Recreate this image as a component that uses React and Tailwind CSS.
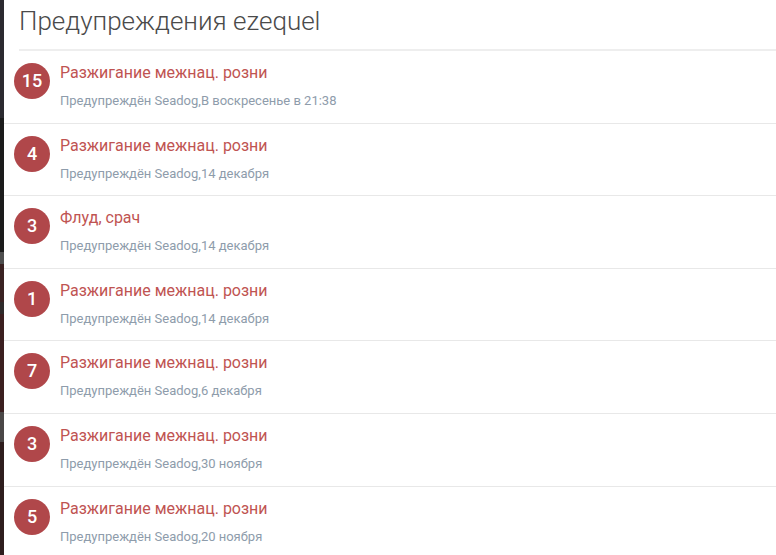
const warnings = [
  { n: 15, title: "Разжигание межнац. розни", when: "В воскресенье в 21:38" },
  { n: 4, title: "Разжигание межнац. розни", when: "14 декабря" },
  { n: 3, title: "Флуд, срач", when: "14 декабря" },
  { n: 1, title: "Разжигание межнац. розни", when: "14 декабря" },
  { n: 7, title: "Разжигание межнац. розни", when: "6 декабря" },
  { n: 3, title: "Разжигание межнац. розни", when: "30 ноября" },
  { n: 5, title: "Разжигание межнац. розни", when: "20 ноября" },
];

function WarningRow({ item }) {
  return (
    <div className="flex h-[72.6px] shrink-0 items-start gap-[10px] border-b border-[#e8e8e8] pl-[10px] pt-[12px]">
      <div className="flex h-[36px] w-[36px] shrink-0 items-center justify-center rounded-full bg-[#b0474a] text-[18px] font-medium leading-none text-white">
        {item.n}
      </div>
      <div className="flex flex-col">
        <span className="text-[16px] leading-[20px] text-[#bf5452]">{item.title}</span>
        <span className="mt-[10px] text-[13px] leading-[16px] text-[#8e9cab]">
          Предупреждён Seadog,{item.when}
        </span>
      </div>
    </div>
  );
}

export default function App() {
  return (
    <div className="flex h-[555px] w-[776px] overflow-hidden bg-white font-['Roboto',sans-serif]">
      {/* backdrop peeking out on the left */}
      <div className="flex w-[4px] shrink-0 flex-col">
        <div className="h-[118px] bg-[#2b2a30]" />
        <div className="h-[134px] bg-[#1b1b1b]" />
        <div className="h-[12px] bg-[#4e4e4e]" />
        <div className="h-[38px] bg-[#3a2222]" />
        <div className="h-[12px] bg-[#2e2a2a]" />
        <div className="h-[98px] bg-[#3b1f20]" />
        <div className="h-[30px] bg-[#4a4747]" />
        <div className="flex-1 bg-[#2e1d1d]" />
      </div>
      <div className="flex flex-1 flex-col bg-white">
        <div className="ml-[15px] h-[51px] shrink-0 border-b-2 border-[#eeeeee]">
          <h1 className="pt-[3px] text-[26px] font-light leading-[36px] text-[#4a4a4a]">
            Предупреждения ezequel
          </h1>
        </div>
        {warnings.map((w, i) => (
          <WarningRow key={i} item={w} />
        ))}
      </div>
    </div>
  );
}
